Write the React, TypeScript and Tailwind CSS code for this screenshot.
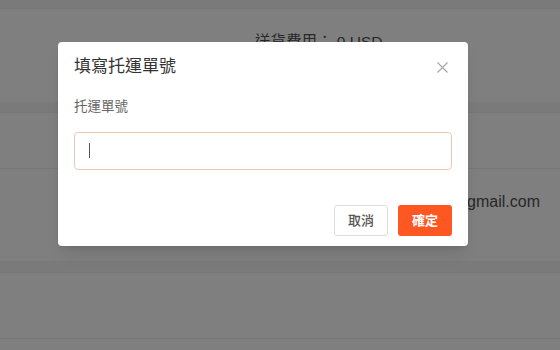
import React from 'react'

const cjk = { fontFamily: '"Liberation Sans", "Noto Sans CJK TC", sans-serif' }

function Page() {
  return (
    <div className="flex flex-col bg-white text-[16px] text-[#505050]">
      <div className="h-[9px] bg-[#f4f4f4] border-b border-[#eeeeee]" />
      <div className="h-[93px] flex pl-[255px] pt-[21px]">
        <span className="text-[15.5px]">送貨費用： 0 USD</span>
      </div>
      <div className="h-[11px] bg-[#f4f4f4] border-b border-[#eeeeee]" />
      <div className="h-[56px] border-b border-[#eeeeee]" />
      <div className="h-[92px] flex justify-end items-center pr-[20px] pb-[26px]">
        <span>customer.service@gmail.com</span>
      </div>
      <div className="h-[12px] bg-[#f4f4f4] border-b border-[#eeeeee]" />
      <div className="h-[66px] border-b border-[#eeeeee]" />
      <div className="h-[11px]" />
    </div>
  )
}

function CloseIcon() {
  return (
    <svg width="11" height="11" viewBox="0 0 11 11" fill="none" stroke="#a8a8a8" strokeWidth="1.2">
      <path d="M0.5 0.5 L10.5 10.5 M10.5 0.5 L0.5 10.5" />
    </svg>
  )
}

function Modal() {
  return (
    <div className="absolute left-[58px] top-[42px] w-[410px] h-[204px] bg-white rounded-[4px] shadow-lg flex flex-col">
      <div className="flex items-center justify-between pl-4 pr-[18px] pt-[13px]">
        <h2 className="text-[17px] leading-6 text-[#333]">填寫托運單號</h2>
        <button className="flex items-center justify-center w-4 h-4">
          <CloseIcon />
        </button>
      </div>
      <div className="px-4 pt-[18px] flex flex-col">
        <label className="text-[13.5px] leading-5 text-[#666]">托運單號</label>
        <div className="relative mt-[15px]">
          <input
            className="w-full h-[38px] rounded-[4px] border border-[#f2c6b6] outline-none px-[14px] text-[14px]"
            style={cjk}
          />
          <span className="absolute left-[15px] top-[11px] w-px h-[15px] bg-[#555]" />
        </div>
      </div>
      <div className="flex justify-end gap-[10px] px-4 mt-auto pb-[10px]">
        <button className="w-[54px] h-[31px] rounded-[3px] border border-[#dddddd] bg-white text-[13px] text-[#555] font-medium">
          取消
        </button>
        <button className="w-[54px] h-[31px] rounded-[3px] bg-[#ff5722] text-[13px] text-white font-bold">
          確定
        </button>
      </div>
    </div>
  )
}

export default function App() {
  return (
    <div className="relative w-[560px] h-[350px] overflow-hidden" style={cjk}>
      <Page />
      <div className="absolute inset-0 bg-black/50" />
      <Modal />
    </div>
  )
}
